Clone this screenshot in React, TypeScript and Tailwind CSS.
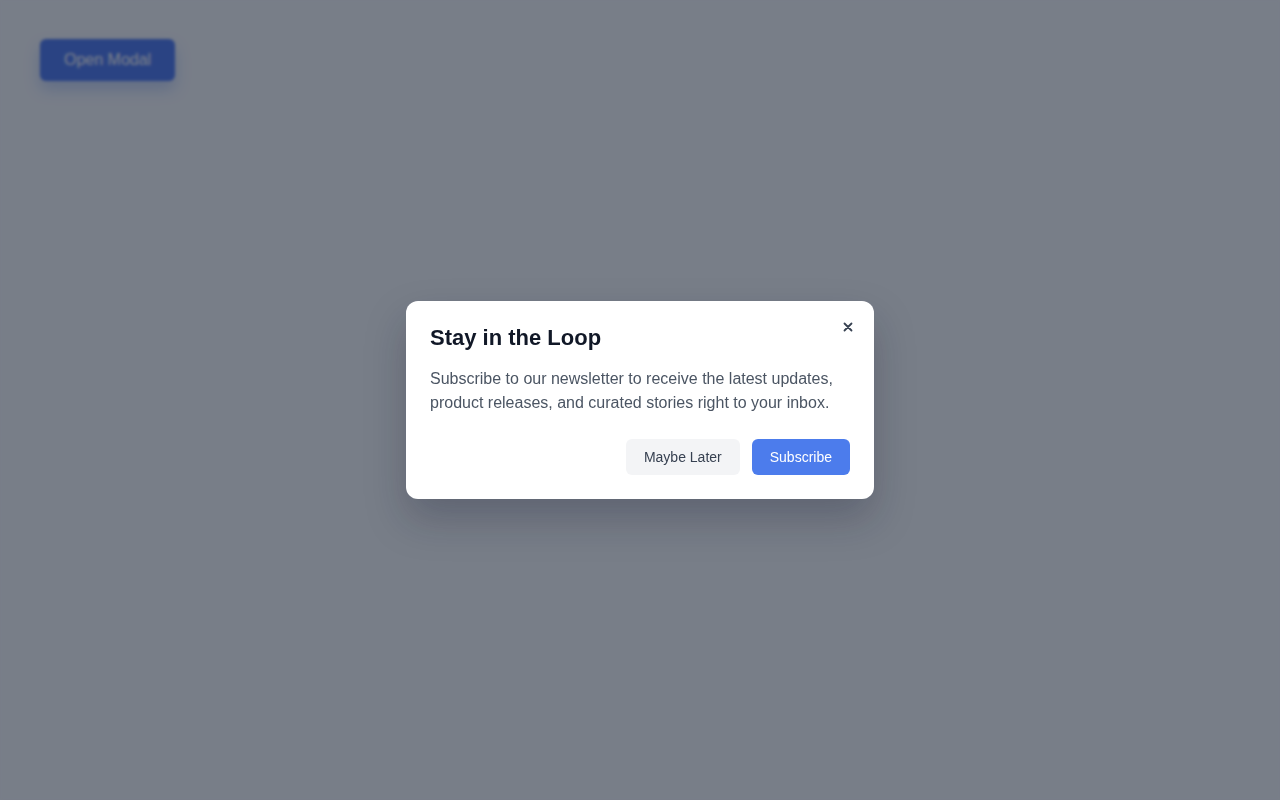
import React from "react";

export default function App() {
  return (
    <div className="relative min-h-screen w-full bg-[#f9fafb]" style={{ fontFamily: '"Liberation Sans", Arial, sans-serif' }}>
      <div className="px-10 pt-[39px]">
        <button className="rounded-md bg-[#4d79f0] px-6 py-[9px] text-base leading-6 text-white shadow-[0_8px_16px_rgba(37,99,235,0.25)]">
          Open Modal
        </button>
      </div>
      <div className="fixed inset-0 flex items-center justify-center bg-[rgba(15,23,42,0.55)] backdrop-blur-[1.5px]">
        <div className="relative w-[468px] rounded-xl bg-white p-6 shadow-[0_20px_40px_rgba(15,23,42,0.25)]">
          <button className="absolute right-4 top-4 flex h-5 w-5 items-center justify-center text-[#374151]">
            <svg width="10" height="10" viewBox="0 0 10 10" fill="none" stroke="currentColor" strokeWidth="1.8" strokeLinecap="round">
              <path d="M1.5 1.5L8.5 8.5M8.5 1.5L1.5 8.5" />
            </svg>
          </button>
          <h2 className="mb-4 text-[22px] font-bold leading-[26px] text-[#111827]">Stay in the Loop</h2>
          <p className="text-base leading-6 text-[#4b5563]">
            Subscribe to our newsletter to receive the latest updates, product releases, and curated stories right to your inbox.
          </p>
          <div className="mt-6 flex justify-end gap-3">
            <button className="rounded-md bg-[#f3f4f6] px-[18px] py-2 text-sm leading-5 text-[#374151]">Maybe Later</button>
            <button className="rounded-md bg-[#4c7cec] px-[18px] py-2 text-sm leading-5 text-white">Subscribe</button>
          </div>
        </div>
      </div>
    </div>
  );
}
